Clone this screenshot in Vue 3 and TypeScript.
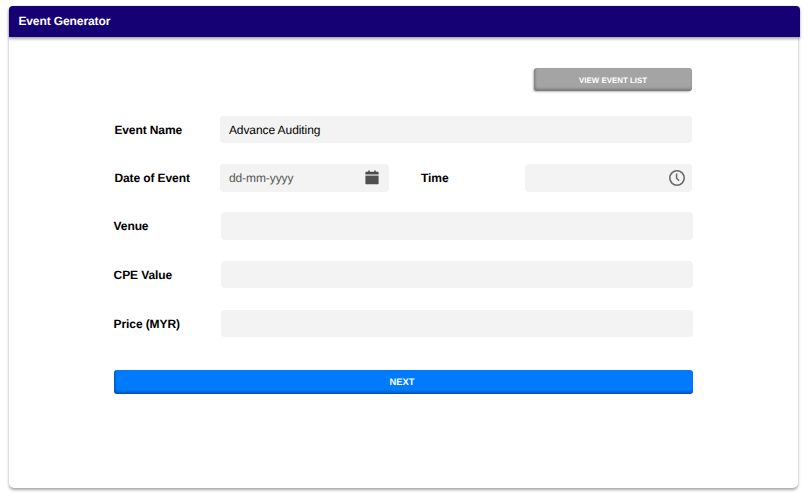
<script setup lang="ts">
import { reactive } from 'vue'

interface EventForm {
  name: string
  date: string
  time: string
  venue: string
  cpe: string
  price: string
}

const form = reactive<EventForm>({
  name: 'Advance Auditing',
  date: '',
  time: '',
  venue: '',
  cpe: '',
  price: '',
})

const details: { key: 'venue' | 'cpe' | 'price'; label: string }[] = [
  { key: 'venue', label: 'Venue' },
  { key: 'cpe', label: 'CPE Value' },
  { key: 'price', label: 'Price (MYR)' },
]
</script>

<template>
  <div class="page">
    <main class="card">
      <header class="header"><h1 class="title">Event Generator</h1></header>
      <form class="form" @submit.prevent>
        <button type="button" class="button list-button">VIEW EVENT LIST</button>

        <div class="upper">
          <div class="row name-row">
            <label class="label" for="name">Event Name</label>
            <div class="field"><input id="name" v-model="form.name" class="input" /></div>
          </div>
          <div class="row">
            <label class="label" for="date">Date of Event</label>
            <div class="field date-field">
              <input id="date" v-model="form.date" class="input" placeholder="dd-mm-yyyy" />
              <svg class="calendar" viewBox="0 0 14 15" aria-hidden="true">
                <path d="M1 1.8h2.2V.6h1.6v1.2h4.4V.6h1.6v1.2H13q.6 0 .6.6v2.2H.4V2.4q0-.6.6-.6z" fill="#4b4b4b" />
                <path d="M.4 4.6h13.2v1.5H.4z" fill="#b0b0b0" />
                <path d="M.4 6.1h13.2v7.5q0 .7-.7.7H1.1q-.7 0-.7-.7z" fill="#505050" />
              </svg>
            </div>
            <label class="label time-label" for="time">Time</label>
            <div class="field time-field">
              <input id="time" v-model="form.time" class="input" />
              <svg class="clock" viewBox="0 0 16 16" fill="none" stroke="#6a6a6a" aria-hidden="true">
                <circle cx="8" cy="8" r="7.2" stroke-width="1.6" />
                <path d="M7.6 3.6v4.6l2.5 2.5" stroke-width="1.5" />
              </svg>
            </div>
          </div>
        </div>

        <div class="lower">
          <div v-for="item in details" :key="item.key" class="row">
            <label class="label" :for="item.key">{{ item.label }}</label>
            <div class="field"><input :id="item.key" v-model="form[item.key]" class="input" /></div>
          </div>
        </div>

        <button type="submit" class="button next-button">NEXT</button>
      </form>
    </main>
  </div>
</template>

<style>
body {
  background: #fff;
}
</style>

<style scoped>
* {
  box-sizing: border-box;
}
.page {
  height: 496px;
  padding: 6px 0 0 9px;
  overflow: hidden;
  text-rendering: geometricPrecision;
}
.card {
  width: 788.5px;
  height: 481.5px;
  background: #fff;
  border-radius: 5px;
  box-shadow: 0 2px 3px rgba(0, 0, 0, 0.34), 0 0 1px rgba(0, 0, 0, 0.1);
  font-family: "Liberation Sans", Arial, sans-serif;
  color: #000;
}
.header {
  display: flex;
  align-items: center;
  width: 790.5px;
  height: 31px;
  padding: 0 0 1px 9.4px;
  background: #150074;
  border-radius: 4px 4px 0 0;
  box-shadow: 0 1.5px 3px rgba(0, 0, 0, 0.35);
}
.title {
  margin: 0;
  font-size: 12px;
  line-height: 14px;
  letter-spacing: -0.1px;
  color: #fff;
}
.form {
  display: flex;
  flex-direction: column;
  width: 579px;
  margin-left: 104.6px;
  padding-top: 31px;
}
.button {
  padding: 0;
  border: 0;
  border-radius: 3px;
  font-family: inherit;
  font-weight: bold;
  color: #fff;
  text-rendering: inherit;
}
.list-button {
  align-self: flex-end;
  width: 158px;
  height: 23px;
  margin-right: 1px;
  padding: 1px 0 0 1px;
  background: #a4a4a4;
  font-size: 7.9px;
  box-shadow: inset 1px -2px 3px rgba(0, 0, 0, 0.28), -1px 1px 2px rgba(0, 0, 0, 0.28);
}
.upper,
.lower {
  display: flex;
  flex-direction: column;
  gap: 21.2px;
}
.upper {
  margin-top: 24.5px;
  padding: 0 1px 0 0.8px;
}
.upper .row:last-child {
  margin-right: -0.8px;
}
.lower {
  margin-top: 20.5px;
}
.row {
  display: flex;
  align-items: center;
  height: 27.5px;
}
.label {
  flex: none;
  width: 105.5px;
  font-size: 12px;
  font-weight: bold;
  line-height: 14px;
  letter-spacing: -0.1px;
}
.name-row .label,
.name-row .input,
.lower .label {
  padding-top: 1px;
}
.lower .label {
  width: 107px;
}
.field {
  display: flex;
  align-items: center;
  flex: 1;
  min-width: 0;
  height: 100%;
  padding-left: 9px;
  border-radius: 4px;
  background: #f3f3f3;
}
.input {
  flex: 1;
  min-width: 0;
  padding: 0;
  border: 0;
  outline: 0;
  background: transparent;
  font: 12px/14px "Liberation Sans", Arial, sans-serif;
  letter-spacing: -0.08px;
  color: #000;
  text-rendering: inherit;
}
.input::placeholder {
  color: #555;
  opacity: 1;
}
.date-field {
  flex: none;
  width: 169px;
  padding-right: 10px;
}
.time-label {
  width: 104.3px;
  margin-left: 32.2px;
}
.time-field {
  padding-right: 7.5px;
}
.calendar {
  width: 14px;
  height: 15px;
}
.clock {
  width: 16px;
  height: 16px;
}
.next-button {
  width: 100%;
  height: 23.5px;
  margin-top: 33.2px;
  padding: 0 2px 1px 0;
  background: #007bff;
  font-size: 9.4px;
  box-shadow: inset 1px -2px 3px rgba(0, 0, 0, 0.34);
}
</style>
